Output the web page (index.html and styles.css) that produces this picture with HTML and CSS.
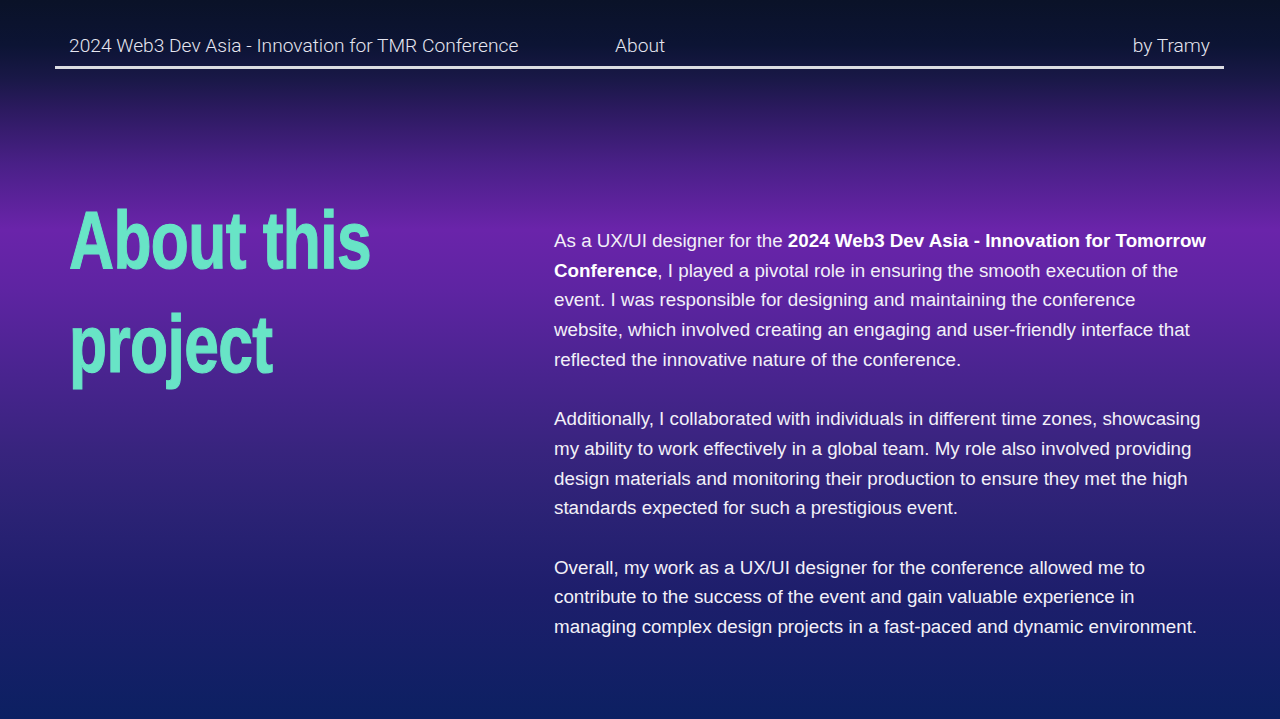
FILE: index.html
```html
<!DOCTYPE html>
<html>
<head>
<meta charset="utf-8">
<link rel="stylesheet" href="styles.css">
</head>
<body>
<div class="page">
  <header class="topbar">
    <span class="title">2024 Web3 Dev Asia - Innovation for TMR Conference</span>
    <span class="nav">About</span>
    <span class="by">by Tramy</span>
  </header>
  <main class="content">
    <h1 class="heading">About this<br>project</h1>
    <div class="text">
      <p>As a UX/UI designer for the <b>2024 Web3 Dev Asia - Innovation for Tomorrow</b> <b>Conference</b>, I played a pivotal role in ensuring the smooth execution of the event. I was responsible for designing and maintaining the conference website, which involved creating an engaging and user-friendly interface that reflected the innovative nature of the conference.</p>
      <p>Additionally, I collaborated with individuals in different time zones, showcasing my ability to work effectively in a global team. My role also involved providing design materials and monitoring their production to ensure they met the high standards expected for such a prestigious event.</p>
      <p>Overall, my work as a UX/UI designer for the conference allowed me to contribute to the success of the event and gain valuable experience in managing complex design projects in a fast-paced and dynamic environment.</p>
    </div>
  </main>
</div>
</body>
</html>
```

FILE: styles.css
```css
html, body {
  margin: 0;
  padding: 0;
}
body {
  width: 1280px;
  height: 719px;
  overflow: hidden;
  font-family: "Liberation Sans", Arial, sans-serif;
  color: #f2f0f8;
  background: linear-gradient(180deg,
    #0a1228 0px,
    #0c1434 45px,
    #1a1848 80px,
    #2c1a60 110px,
    #4a2088 165px,
    #6a24aa 230px,
    #5e24a2 290px,
    #4a2490 370px,
    #38247e 450px,
    #2a2274 520px,
    #1e1e6c 590px,
    #0c2062 719px);
}
.page {
  padding: 0 56px 0 55px;
}
.topbar {
  display: flex;
  align-items: center;
  box-sizing: border-box;
  height: 69px;
  padding: 25px 14px 0 14px;
  border-bottom: 3px solid #dcdce2;
  font-family: Roboto, "Liberation Sans", sans-serif;
  font-weight: 300;
  font-size: 19.2px;
  color: #e6e6f0;
}
.title {
  width: 546px;
}
.nav {
  flex: 1;
}
.content {
  display: flex;
  padding: 119px 14px 0 14px;
}
.heading {
  margin: 0;
  width: 485px;
  flex: none;
  font-family: "Liberation Sans", sans-serif;
  font-weight: 700;
  font-size: 82px;
  line-height: 104px;
  color: #68e4c6;
  -webkit-text-stroke: 1.2px #68e4c6;
  letter-spacing: -0.8px;
  transform: scaleX(0.76);
  transform-origin: left top;
}
.text {
  width: 655px;
  padding-top: 38px;
  font-size: 18.8px;
  line-height: 29.7px;
}
.text p {
  margin: 0 0 29.7px 0;
}
.text b {
  font-weight: 700;
  color: #ffffff;
}
```
